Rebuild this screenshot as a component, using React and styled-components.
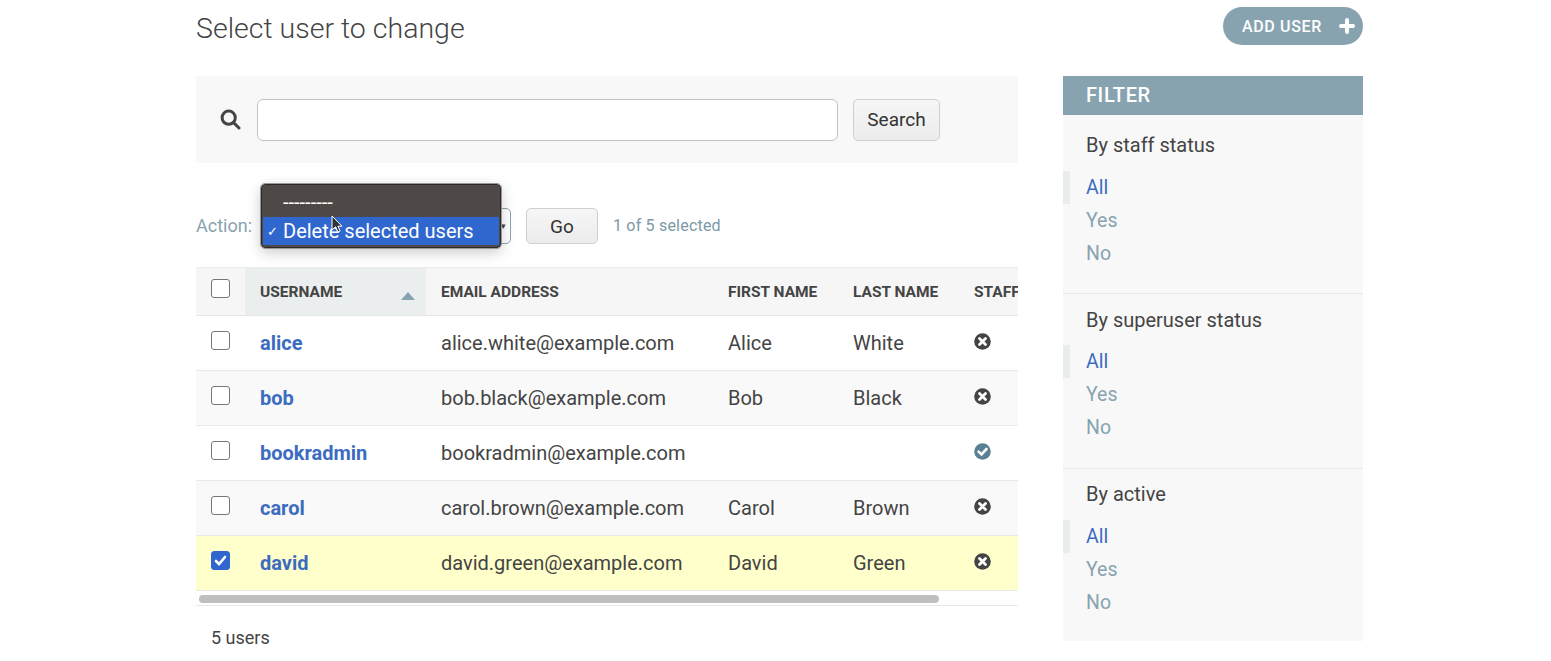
import React from "react";
import styled, { createGlobalStyle } from "styled-components";

const GlobalStyle = createGlobalStyle`
  body {
    margin: 0;
    background: #fff;
    color: #333;
    font-family: Roboto, "Liberation Sans", sans-serif;
  }
`;

const Page = styled.div`
  width: 1551px;
  height: 661px;
  overflow: hidden;
  box-sizing: border-box;
  padding: 0 188px 0 196px;
`;
const TopBar = styled.header`
  height: 76px;
  display: flex;
  justify-content: space-between;
  align-items: flex-start;
`;
const Title = styled.h1`
  margin: 11px 0 0;
  font-size: 28.5px;
  line-height: 36px;
  font-weight: 300;
  color: #444;
`;
const AddButton = styled.a`
  margin-top: 7px;
  height: 38px;
  width: 140px;
  box-sizing: border-box;
  padding: 0 8px 0 19px;
  display: flex;
  align-items: center;
  justify-content: space-between;
  border-radius: 19px;
  background: #88a3b0;
  color: #fff;
  font-size: 16px;
  font-weight: 500;
  letter-spacing: 0.65px;
  white-space: nowrap;
`;
const Columns = styled.div`
  display: grid;
  grid-template-columns: 822px 300px;
  column-gap: 45px;
  align-items: start;
`;
const Main = styled.main`
  position: relative;
  min-width: 0;
`;
const SearchBar = styled.div`
  height: 87px;
  box-sizing: border-box;
  padding-left: 24px;
  background: #f8f8f8;
  display: flex;
  align-items: center;
`;
const SearchInput = styled.div`
  width: 581px;
  height: 42px;
  margin-left: 16px;
  box-sizing: border-box;
  background: #fff;
  border: 1px solid #c4c4c4;
  border-radius: 6px;
`;
const Button = styled.button`
  width: ${(p) => p.$width}px;
  height: ${(p) => p.$height}px;
  margin-left: 15px;
  padding: 0;
  border: 1px solid #cfcfcf;
  border-radius: 5px;
  background: linear-gradient(#f6f6f6, #ececec);
  color: #333;
  font-family: inherit;
  font-size: 19px;
`;
const ActionRow = styled.div`
  height: 104px;
  display: flex;
  align-items: flex-start;
  padding-top: 45px;
  box-sizing: border-box;
`;
const ActionLabel = styled.span`
  width: 65px;
  height: 36px;
  line-height: 36px;
  color: #88a3b0;
  font-size: 18px;
`;
const SelectBox = styled.div`
  width: 250px;
  height: 36px;
  box-sizing: border-box;
  border: 1px solid #88a3b0;
  border-radius: 5px;
  background: #fff;
  display: flex;
  align-items: center;
  justify-content: flex-end;
  padding-right: 4px;
  font-size: 9px;
  color: #444;
`;
const Counter = styled.span`
  margin-left: 15px;
  height: 36px;
  line-height: 36px;
  color: #7c98a6;
  font-size: 16px;
  letter-spacing: 0.2px;
`;
const Menu = styled.div`
  position: absolute;
  left: 65px;
  top: 108px;
  width: 240px;
  height: 64px;
  box-sizing: border-box;
  padding: 2px 1px 0;
  border: 1px solid #2b2b2b;
  outline: 1px solid #999;
  border-radius: 4px;
  background: #4e4846;
  box-shadow: 0 4px 14px rgba(0, 0, 0, 0.22);
  color: #fff;
  font-size: 20px;
  z-index: 2;
`;
const MenuItem = styled.div`
  height: ${(p) => (p.$active ? 28 : 30)}px;
  display: flex;
  align-items: center;
  padding-left: 4px;
  background: ${(p) => (p.$active ? "#2f67cf" : "transparent")};
  white-space: nowrap;
`;
const MenuTick = styled.span`
  width: 16px;
  font-size: 13px;
`;
const Cursor = styled.svg`
  position: absolute;
  left: 135px;
  top: 139px;
  z-index: 3;
`;
const TableWrap = styled.div`
  overflow: hidden;
  width: 822px;
`;
const Table = styled.table`
  border-collapse: collapse;
  table-layout: fixed;
  width: 900px;
  border-top: 1px solid #ececec;
`;
const HeadCell = styled.th`
  width: ${(p) => p.$width}px;
  height: 48px;
  box-sizing: border-box;
  padding: 0 0 0 15px;
  background: ${(p) => (p.$sorted ? "#eaeeee" : "#f6f6f6")};
  border-bottom: 1px solid #e6e6e6;
  color: #444;
  font-size: 15.5px;
  font-weight: 700;
  text-align: left;
  white-space: nowrap;
  overflow: hidden;
`;
const SortHead = styled.div`
  display: flex;
  align-items: center;
  justify-content: space-between;
  padding-right: 11px;
`;
const SortArrow = styled.span`
  width: 0;
  height: 0;
  margin-top: 8px;
  border-left: 7px solid transparent;
  border-right: 7px solid transparent;
  border-bottom: 8px solid #88a3b0;
`;
const Row = styled.tr`
  height: 55px;
  background: ${(p) => (p.$selected ? "#ffffcc" : p.$alt ? "#f9f9f9" : "#fff")};
`;
const Cell = styled.td`
  box-sizing: border-box;
  padding: 0 0 0 15px;
  border-bottom: 1px solid #e8e8e8;
  color: #444;
  font-size: 20px;
  white-space: nowrap;
`;
const NameLink = styled.a`
  color: #3c6cc0;
  font-weight: 700;
`;
const Check = styled.span`
  display: flex;
  align-items: center;
  justify-content: center;
  width: 19px;
  height: 19px;
  box-sizing: border-box;
  margin-bottom: 6px;
  border: 1px solid ${(p) => (p.$on ? "#2f67cf" : "#777")};
  border-radius: 3px;
  background: ${(p) => (p.$on ? "#2f67cf" : "#fff")};
`;
const ScrollTrack = styled.div`
  height: 15px;
  box-sizing: border-box;
  padding: 4px 3px 0;
  border-bottom: 1px solid #e8e8e8;
`;
const ScrollThumb = styled.div`
  width: 740px;
  height: 8px;
  border-radius: 4px;
  background: #bfbfbf;
`;
const Paginator = styled.div`
  padding: 21px 0 0 15px;
  font-size: 18px;
  line-height: 22px;
  color: #444;
`;
const Sidebar = styled.aside`
  height: 565px;
  background: #f8f8f8;
`;
const FilterTitle = styled.h2`
  margin: 0;
  height: 39px;
  line-height: 39px;
  padding-left: 23px;
  background: #88a3b0;
  color: #fff;
  font-size: 20px;
  font-weight: 500;
  letter-spacing: 0.6px;
`;
const FilterGroup = styled.section`
  height: ${(p) => p.$height}px;
  box-sizing: border-box;
  padding-top: ${(p) => p.$top}px;
  border-bottom: ${(p) => (p.$last ? "none" : "1px solid #e8e8e8")};
`;
const GroupTitle = styled.h3`
  margin: 0 0 ${(p) => p.$gap}px;
  padding-left: 23px;
  height: 24px;
  line-height: 24px;
  font-size: 20px;
  font-weight: 400;
  color: #444;
`;
const FilterItem = styled.a`
  display: block;
  height: 33px;
  line-height: 33px;
  box-sizing: border-box;
  padding-left: ${(p) => (p.$active ? 16 : 23)}px;
  border-left: ${(p) => (p.$active ? "7px solid #e9ecec" : "none")};
  color: ${(p) => (p.$active ? "#3c6cc0" : "#88a3b0")};
  font-size: 19.5px;
`;

const SearchIcon = () => (
  <svg width="21" height="21" viewBox="0 0 21 21" fill="none" stroke="#444" strokeWidth="3">
    <circle cx="8.7" cy="8.7" r="6.6" />
    <path d="M13.6 13.6 19 19" strokeLinecap="round" />
  </svg>
);
const PlusIcon = () => (
  <svg width="16" height="16" viewBox="0 0 16 16" stroke="#fff" strokeWidth="4" strokeLinecap="round">
    <path d="M8 2v12M2 8h12" />
  </svg>
);
const NoIcon = () => (
  <svg width="17" height="17" viewBox="0 0 17 17">
    <circle cx="8.5" cy="8.5" r="8.3" fill="#444" />
    <path d="M5.5 5.5l6 6M11.5 5.5l-6 6" stroke="#fff" strokeWidth="2.8" strokeLinecap="round" />
  </svg>
);
const YesIcon = () => (
  <svg width="17" height="17" viewBox="0 0 17 17">
    <circle cx="8.5" cy="8.5" r="8.3" fill="#5b8094" />
    <path d="M4.6 8.6l2.9 2.8 5-5.4" fill="none" stroke="#fff" strokeWidth="2.6" strokeLinecap="round" />
  </svg>
);
const TickIcon = () => (
  <svg width="13" height="13" viewBox="0 0 13 13" fill="none" stroke="#fff" strokeWidth="2.6" strokeLinecap="round">
    <path d="M2 7l3 3 6-7" />
  </svg>
);

const users = [
  { name: "alice", email: "alice.white@example.com", first: "Alice", last: "White" },
  { name: "bob", email: "bob.black@example.com", first: "Bob", last: "Black" },
  { name: "bookradmin", email: "bookradmin@example.com", first: "", last: "", staff: true },
  { name: "carol", email: "carol.brown@example.com", first: "Carol", last: "Brown" },
  { name: "david", email: "david.green@example.com", first: "David", last: "Green", selected: true },
];

const filters = [
  { title: "By staff status", height: 179, top: 18, gap: 14 },
  { title: "By superuser status", height: 175, top: 14, gap: 13 },
  { title: "By active", height: 172, top: 13, gap: 14, last: true },
];

export default function App() {
  return (
    <Page>
      <GlobalStyle />
      <TopBar>
        <Title>Select user to change</Title>
        <AddButton>
          ADD USER <PlusIcon />
        </AddButton>
      </TopBar>
      <Columns>
        <Main>
          <SearchBar>
            <SearchIcon />
            <SearchInput />
            <Button $width={87} $height={42}>Search</Button>
          </SearchBar>
          <ActionRow>
            <ActionLabel>Action:</ActionLabel>
            <SelectBox>▾</SelectBox>
            <Button $width={72} $height={36}>Go</Button>
            <Counter>1 of 5 selected</Counter>
          </ActionRow>
          <Menu>
            <MenuItem><MenuTick />---------</MenuItem>
            <MenuItem $active><MenuTick>✓</MenuTick>Delete selected users</MenuItem>
          </Menu>
          <Cursor width="12" height="19" viewBox="0 0 12 19">
            <path d="M1 1v14l3.6-3.2L7 17l2.2-1-2.3-4.8H11z" fill="#333" stroke="#fff" strokeWidth="1" />
          </Cursor>
          <TableWrap>
            <Table>
              <thead>
                <tr>
                  <HeadCell $width={49}><Check /></HeadCell>
                  <HeadCell $width={181} $sorted>
                    <SortHead>USERNAME<SortArrow /></SortHead>
                  </HeadCell>
                  <HeadCell $width={287}>EMAIL ADDRESS</HeadCell>
                  <HeadCell $width={125}>FIRST NAME</HeadCell>
                  <HeadCell $width={121}>LAST NAME</HeadCell>
                  <HeadCell $width={137}>STAFF STATUS</HeadCell>
                </tr>
              </thead>
              <tbody>
                {users.map((u, i) => (
                  <Row key={u.name} $alt={i % 2 === 1} $selected={u.selected}>
                    <Cell><Check $on={u.selected}>{u.selected && <TickIcon />}</Check></Cell>
                    <Cell><NameLink>{u.name}</NameLink></Cell>
                    <Cell>{u.email}</Cell>
                    <Cell>{u.first}</Cell>
                    <Cell>{u.last}</Cell>
                    <Cell>{u.staff ? <YesIcon /> : <NoIcon />}</Cell>
                  </Row>
                ))}
              </tbody>
            </Table>
          </TableWrap>
          <ScrollTrack><ScrollThumb /></ScrollTrack>
          <Paginator>5 users</Paginator>
        </Main>
        <Sidebar>
          <FilterTitle>FILTER</FilterTitle>
          {filters.map((f) => (
            <FilterGroup key={f.title} $height={f.height} $top={f.top} $last={f.last}>
              <GroupTitle $gap={f.gap}>{f.title}</GroupTitle>
              <FilterItem $active>All</FilterItem>
              <FilterItem>Yes</FilterItem>
              <FilterItem>No</FilterItem>
            </FilterGroup>
          ))}
        </Sidebar>
      </Columns>
    </Page>
  );
}
